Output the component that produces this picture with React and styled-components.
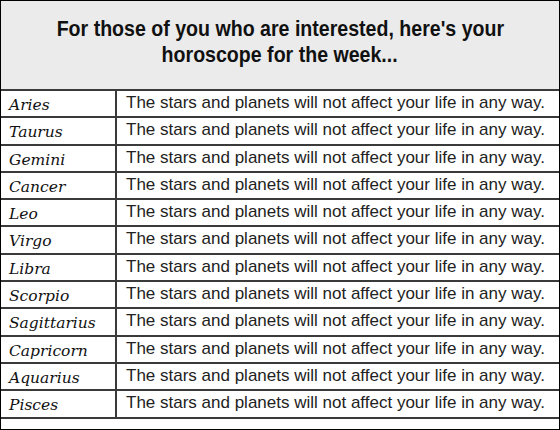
import styled, { createGlobalStyle } from "styled-components";

const Global = createGlobalStyle`
    body {
        margin: 0;
        background: #fff;
    }
`

const Frame = styled.div`
    width: 560px;
    height: 430px;
    box-sizing: border-box;
    border: 1px solid #000;
    background: #fff;
    display: flex;
    flex-direction: column;
`

const Header = styled.div`
    height: 88px;
    background: #ebebeb;
    display: flex;
    flex-direction: column;
    align-items: center;
    padding-top: 15px;
    box-sizing: border-box;
`

// no narrow font installed, so squeeze the bold sans a bit
const Title = styled.div`
    font-family: "Liberation Sans Narrow", "Liberation Sans", Arial, sans-serif;
    font-weight: bold;
    font-size: 22px;
    line-height: 26px;
    color: #111;
    text-align: center;
    white-space: nowrap;
    transform: scaleX(0.89);
`

const Table = styled.div`
    border-top: 2px solid #3a3a3a;
    display: grid;
    grid-template-columns: 116px 1fr;
`

const Cell = styled.div`
    height: 27.3px;
    box-sizing: border-box;
    border-bottom: 2px solid #3a3a3a;
    border-right: ${({ $sign }) => ($sign ? "2px solid #3a3a3a" : "none")};
    padding: ${({ $sign }) => ($sign ? "4px 0 0 8px" : "2px 0 0 9px")};
    line-height: 20px;
    font-family: ${({ $sign }) =>
        $sign ? '"DejaVu Serif", "Liberation Serif", serif' : '"Liberation Sans", Arial, sans-serif'};
    font-style: ${({ $sign }) => ($sign ? "italic" : "normal")};
    font-size: ${({ $sign }) => ($sign ? "15.5px" : "17px")};
    color: ${({ $sign }) => ($sign ? "#111" : "#222")};
    white-space: nowrap;
    overflow: hidden;
`

const signs = [
    "Aries", "Taurus", "Gemini", "Cancer", "Leo", "Virgo",
    "Libra", "Scorpio", "Sagittarius", "Capricorn", "Aquarius", "Pisces",
]

function App() {
    return (
        <Frame>
            <Global />
            <Header>
                <Title>For those of you who are interested, here's your</Title>
                <Title>horoscope for the week...</Title>
            </Header>
            <Table>
                {signs.map((sign) => [
                    <Cell key={sign} $sign>{sign}</Cell>,
                    <Cell key={sign + "-text"}>The stars and planets will not affect your life in any way.</Cell>,
                ])}
            </Table>
        </Frame>
    );
}

export default App;
